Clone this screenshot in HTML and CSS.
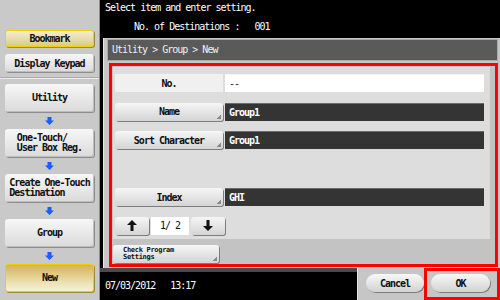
FILE: index.html
```html
<!DOCTYPE html>
<html lang="en">
<head>
  <meta charset="UTF-8">
  <title>Group - New</title>
  <link rel="stylesheet" href="styles.css">
</head>
<body>

  <div class="screen">

    <aside class="side">
      <div class="side-top">
        <div class="btn btn-gold mark">Bookmark</div>
        <div class="btn keypad">Display Keypad</div>
      </div>

      <nav class="trail">
        <div class="btn step">Utility</div>
        <div class="arrow"><svg width="9" height="8" viewBox="0 0 9 8"><path d="M2.5 0h4v3.5H9L4.5 8 0 3.5h2.5z" fill="#1f5cff"/></svg></div>
        <div class="btn step two"><span>One-Touch/<br>User Box Reg.</span></div>
        <div class="arrow"><svg width="9" height="8" viewBox="0 0 9 8"><path d="M2.5 0h4v3.5H9L4.5 8 0 3.5h2.5z" fill="#1f5cff"/></svg></div>
        <div class="btn step two"><span>Create One-Touch<br>Destination</span></div>
        <div class="arrow"><svg width="9" height="8" viewBox="0 0 9 8"><path d="M2.5 0h4v3.5H9L4.5 8 0 3.5h2.5z" fill="#1f5cff"/></svg></div>
        <div class="btn step">Group</div>
        <div class="arrow"><svg width="9" height="8" viewBox="0 0 9 8"><path d="M2.5 0h4v3.5H9L4.5 8 0 3.5h2.5z" fill="#1f5cff"/></svg></div>
        <div class="btn step btn-gold new">New</div>
      </nav>
    </aside>

    <main class="main">
      <div class="msg">
        <div class="msg-line">Select item and enter setting.</div>
        <div class="msg-line dest">No. of Destinations :   001</div>
      </div>

      <section class="panel">
        <div class="crumb">Utility &gt; Group &gt; New</div>

        <div class="form-box">
          <div class="form">
            <div class="row">
              <div class="key flat">No.</div>
              <div class="val blank">--</div>
            </div>
            <div class="row">
              <div class="key">Name</div>
              <div class="val">Group1</div>
            </div>
            <div class="row">
              <div class="key">Sort Character</div>
              <div class="val">Group1</div>
            </div>
            <div class="row"></div>
            <div class="row">
              <div class="key">Index</div>
              <div class="val">GHI</div>
            </div>
            <div class="row pager">
              <div class="key page-btn"><svg width="10" height="11" viewBox="0 0 10 11"><path d="M5 0L10 5H6.5V11h-3V5H0z" fill="#111"/></svg></div>
              <div class="page-num">1/ 2</div>
              <div class="key page-btn"><svg width="10" height="11" viewBox="0 0 10 11"><path d="M5 11L10 6H6.5V0h-3V6H0z" fill="#111"/></svg></div>
            </div>
          </div>

          <div class="form-foot">
            <div class="key check">Check Program<br>Settings</div>
          </div>
        </div>
      </section>

      <footer class="foot">
        <div class="clock">07/03/2012   13:17</div>
        <div class="actions">
          <div class="pill cancel">Cancel</div>
          <div class="ok-mark">
            <div class="pill ok">OK</div>
          </div>
        </div>
      </footer>
    </main>

  </div>

</body>
</html>
```

FILE: styles.css
```css
body {
  margin: 0;
  background-color: #000;
  font-family: "DejaVu Sans Mono", "Liberation Mono", monospace;
  font-size: 10px;
  letter-spacing: -1px;
}

.screen {
  display: flex;
  width: 500px;
  height: 300px;
  overflow: hidden;
}

/* left column */
.side {
  width: 99px;
  background-color: #c9c9c9;
  border-right: 1px solid #8c8c8c;
  display: flex;
  flex-direction: column;
}

.side-top {
  height: 78px;
  padding: 30px 0 0 5px;
  box-sizing: border-box;
  border-bottom: 1px solid #a9a9a9;
  box-shadow: 0 1px 0 #ececec;
  display: flex;
  flex-direction: column;
  gap: 7px;
}

.btn {
  width: 89px;
  box-sizing: border-box;
  display: flex;
  align-items: center;
  justify-content: center;
  text-align: center;
  font-weight: bold;
  color: #111;
  background: linear-gradient(#f7f7f7, #dadada);
  border-radius: 3px;
  box-shadow: 1px 1px 0 #8d8d8d, inset -1px -1px 0 #bdbdbd;
}

.mark {
  height: 17px;
}

.keypad {
  height: 18px;
}

.btn-gold {
  background: linear-gradient(#f3edd6, #dccb86);
  border: 1px solid #f0cf00;
  box-shadow: 1px 1px 0 #9c8a3c;
}

.trail {
  padding: 6px 0 0 5px;
  display: flex;
  flex-direction: column;
}

.step {
  height: 28px;
  line-height: 10px;
}

.step.two {
  text-align: left;
}

.btn-gold.new {
  background: linear-gradient(#d3b254, #efe6bd 75%, #f4efd6);
}

.arrow {
  width: 89px;
  height: 17px;
  display: flex;
  align-items: center;
  justify-content: center;
}

/* right column */
.main {
  width: 400px;
  display: flex;
  flex-direction: column;
  color: #fff;
}

.msg {
  height: 38px;
  padding-left: 5px;
  box-sizing: border-box;
}

.msg-line {
  height: 12px;
  line-height: 12px;
  padding-top: 2px;
  white-space: pre;
}

.dest {
  padding: 7px 0 0 29px;
}

.panel {
  margin-left: 3px;
  width: 397px;
  height: 230px;
  box-sizing: border-box;
  padding: 1px 0 0 3px;
  background-color: #c6c6c6;
  border-left: 1px solid #e4e4e4;
}

.crumb {
  width: 391px;
  height: 22px;
  box-sizing: border-box;
  padding-left: 4px;
  line-height: 20px;
  background-color: #5a5a5a;
  border: 1px solid #a9a9a9;
  color: #f0f0f0;
}

.form-box {
  margin: 2px 0 0 2px;
  width: 389px;
  height: 204px;
  box-sizing: border-box;
  border: 3px solid #ff0000;
  background-color: #c3c3c3;
}

.form {
  margin: 1px 0 0 1px;
  width: 377px;
  height: 172px;
  box-sizing: border-box;
  padding: 7px 0 0 2px;
  background-color: #dddddd;
  display: flex;
  flex-direction: column;
  gap: 10.5px;
}

.row {
  height: 18px;
  display: flex;
  gap: 2px;
}

.key {
  width: 108px;
  height: 18px;
  box-sizing: border-box;
  display: flex;
  align-items: center;
  justify-content: center;
  font-weight: bold;
  color: #111;
  border-radius: 3px;
  background:
    linear-gradient(to top left, #8a8a8a 3px, transparent 3px) right 2px bottom 2px / 5px 5px no-repeat,
    linear-gradient(#f6f6f6, #d4d4d4);
  box-shadow: 1px 1px 0 #7d7d7d;
}

.key.flat {
  background: #f0f0f0;
  box-shadow: none;
  border-radius: 0;
}

.val {
  width: 259px;
  box-sizing: border-box;
  padding-left: 4px;
  line-height: 17px;
  font-weight: bold;
  color: #fff;
  background-color: #343434;
  border-top: 1px solid #6a6a6a;
}

.val.blank {
  color: #222;
  background-color: #fff;
  border-top: 1px solid #f4f4f4;
  font-weight: normal;
}

.pager {
  gap: 2px;
}

.page-btn {
  width: 34px;
  background: linear-gradient(#f6f6f6, #d4d4d4);
}

.page-num {
  width: 38px;
  background-color: #fff;
  color: #111;
  line-height: 18px;
  text-align: center;
  white-space: pre;
}

.form-foot {
  padding: 6px 0 0 1px;
}

.check {
  width: 106px;
  font-size: 7px;
  line-height: 7px;
  letter-spacing: -0.3px;
  justify-content: flex-start;
  padding: 0 0 0 10px;
  text-align: left;
}

/* bottom bar */
.foot {
  height: 32px;
  display: flex;
}

.clock {
  flex: 1;
  padding-left: 5px;
  border-top: 4px solid #4a4a4a;
  line-height: 27px;
  white-space: pre;
}

.actions {
  width: 143px;
  background-color: #c6c6c6;
  border-left: 1px solid #e4e4e4;
  display: flex;
  align-items: flex-start;
  padding-left: 8px;
  box-sizing: border-box;
}

.pill {
  height: 18px;
  display: flex;
  align-items: center;
  justify-content: center;
  font-weight: bold;
  color: #111;
  border-radius: 9px;
  background: linear-gradient(#f8f8f8, #d2d2d2);
  box-shadow: 1px 1px 0 #7d7d7d;
}

.cancel {
  width: 58px;
  margin-top: 6px;
}

.ok-mark {
  width: 76px;
  height: 32px;
  box-sizing: border-box;
  border: 3px solid #ff0000;
  padding: 3px 0 0 4px;
}

.ok {
  width: 59px;
}
```
